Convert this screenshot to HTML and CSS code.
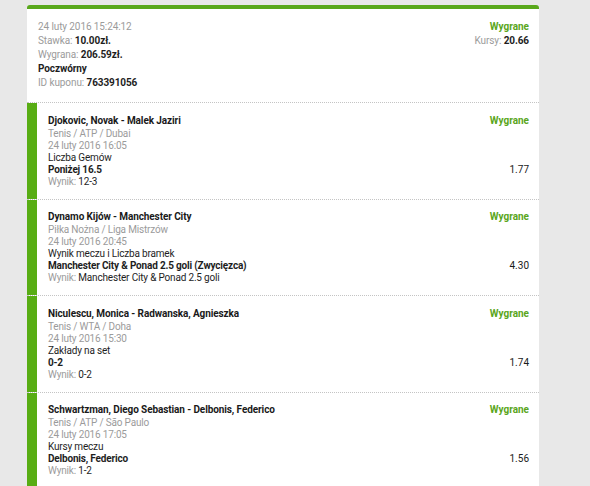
FILE: index.html
```html
<!DOCTYPE html>
<html lang="pl">
<head>
<meta charset="utf-8">
<title>Kupon</title>
<link rel="stylesheet" href="styles.css">
</head>
<body>
<div class="card">
  <div class="header">
    <div class="header-left">
      <div class="line muted">24 luty 2016 15:24:12</div>
      <div class="line"><span class="muted">Stawka:</span> <b>10.00zł.</b></div>
      <div class="line"><span class="muted">Wygrana:</span> <b>206.59zł.</b></div>
      <div class="line"><b>Poczwórny</b></div>
      <div class="line"><span class="muted">ID kuponu:</span> <b>763391056</b></div>
    </div>
    <div class="header-right">
      <div class="line status">Wygrane</div>
      <div class="line"><span class="muted">Kursy:</span> <b>20.66</b></div>
    </div>
  </div>

  <div class="bet">
    <div class="bar"></div>
    <div class="bet-body">
      <div class="title-row"><span class="title">Djokovic, Novak - Malek Jaziri</span><span class="status">Wygrane</span></div>
      <div class="line muted">Tenis / ATP / Dubai</div>
      <div class="line muted">24 luty 2016 16:05</div>
      <div class="line">Liczba Gemów</div>
      <div class="line split"><b>Poniżej 16.5</b><span class="odds">1.77</span></div>
      <div class="line"><span class="muted">Wynik:</span> 12-3</div>
    </div>
  </div>

  <div class="bet">
    <div class="bar"></div>
    <div class="bet-body">
      <div class="title-row"><span class="title">Dynamo Kijów - Manchester City</span><span class="status">Wygrane</span></div>
      <div class="line muted">Piłka Nożna / Liga Mistrzów</div>
      <div class="line muted">24 luty 2016 20:45</div>
      <div class="line">Wynik meczu i Liczba bramek</div>
      <div class="line split"><b>Manchester City &amp; Ponad 2.5 goli (Zwycięzca)</b><span class="odds">4.30</span></div>
      <div class="line"><span class="muted">Wynik:</span> Manchester City &amp; Ponad 2.5 goli</div>
    </div>
  </div>

  <div class="bet">
    <div class="bar"></div>
    <div class="bet-body">
      <div class="title-row"><span class="title">Niculescu, Monica - Radwanska, Agnieszka</span><span class="status">Wygrane</span></div>
      <div class="line muted">Tenis / WTA / Doha</div>
      <div class="line muted">24 luty 2016 15:30</div>
      <div class="line">Zakłady na set</div>
      <div class="line split"><b>0-2</b><span class="odds">1.74</span></div>
      <div class="line"><span class="muted">Wynik:</span> 0-2</div>
    </div>
  </div>

  <div class="bet">
    <div class="bar"></div>
    <div class="bet-body">
      <div class="title-row"><span class="title">Schwartzman, Diego Sebastian - Delbonis, Federico</span><span class="status">Wygrane</span></div>
      <div class="line muted">Tenis / ATP / São Paulo</div>
      <div class="line muted">24 luty 2016 17:05</div>
      <div class="line">Kursy meczu</div>
      <div class="line split"><b>Delbonis, Federico</b><span class="odds">1.56</span></div>
      <div class="line"><span class="muted">Wynik:</span> 1-2</div>
    </div>
  </div>
</div>
</body>
</html>
```

FILE: styles.css
```css
html, body {
  margin: 0;
  padding: 0;
}
body {
  background: #e8e8e8;
  font-family: Roboto, "Liberation Sans", Arial, sans-serif;
  font-size: 10px;
  color: #1e1e1e;
  padding-top: 5px;
  height: 481px;
  overflow: hidden;
}
b {
  font-weight: 700;
}
.card {
  margin-left: 27px;
  width: 512px;
  background: #fff;
  border-top: 4px solid #59a81b;
  border-radius: 3px 3px 0 0;
}
.header {
  display: flex;
  justify-content: space-between;
  padding: 11px 10px 12px 11px;
  letter-spacing: -0.1px;
}
.header .line {
  line-height: 14px;
}
.header-right {
  text-align: right;
}
.muted {
  color: #9b9b9b;
}
.status {
  color: #5aa61c;
  font-weight: 700;
  letter-spacing: 0;
}
.bet {
  display: flex;
  border-top: 1px dotted #c4c4c4;
}
.bar {
  width: 10px;
  flex: 0 0 10px;
  background: #58ad14;
}
.bet-body {
  flex: 1;
  padding: 9.5px 10px 11px 11px;
  letter-spacing: -0.18px;
}
.title-row {
  display: flex;
  justify-content: space-between;
  line-height: 15px;
}
.title {
  font-weight: 700;
  color: #1a1a1a;
  letter-spacing: -0.1px;
}
.bet-body .line {
  line-height: 12px;
}
.split {
  display: flex;
  justify-content: space-between;
}
.odds {
  color: #1a1a1a;
  letter-spacing: 0;
}
```
